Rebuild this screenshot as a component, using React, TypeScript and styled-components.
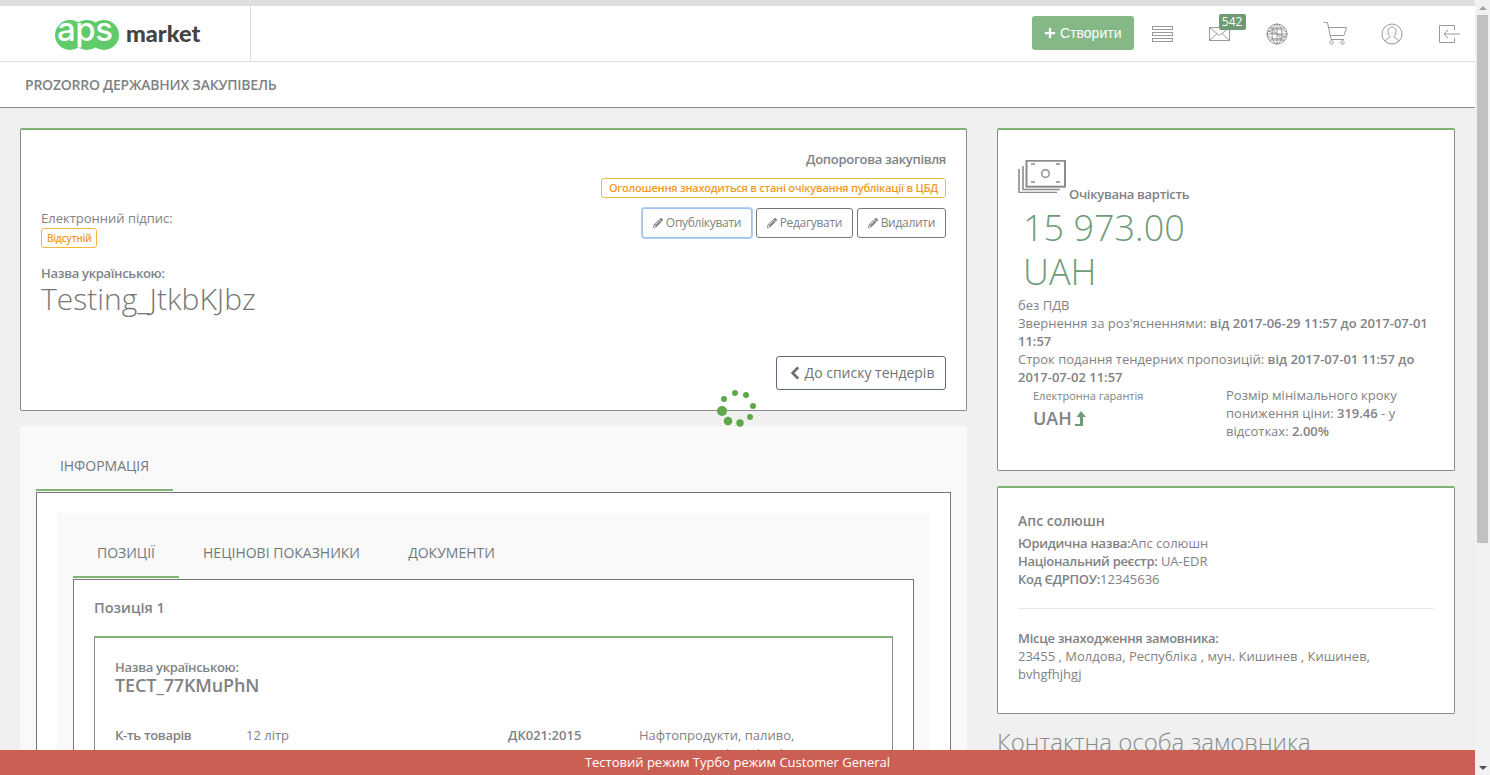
import * as React from "react";
import styled, { createGlobalStyle, css } from "styled-components";
import { FaChevronLeft, FaPencilAlt, FaPlus } from "react-icons/fa";

const GlobalStyles = createGlobalStyle`
  html, body, #root {
    height: 100%;
    overflow: hidden;
  }
  *, *:before, *:after {
    box-sizing: border-box;
    margin: 0;
    padding: 0;
  }
  body {
    background: #f0f0f0;
    color: #808285;
    font-family: "Open Sans", sans-serif;
    font-size: 13px;
    line-height: 18px;
  }
`;

// the semibold cyrillic in the shot runs narrower than ours
const tightBold = css`
  font-weight: 600;
  letter-spacing: -0.3px;
`;

const Page = styled.div`
  width: 1475px;
  height: 775px;
  overflow: hidden;
`;

const TopStrip = styled.div`
  height: 6px;
  background: #dedede;
`;

const Header = styled.header`
  display: flex;
  align-items: center;
  height: 56px;
  background: #fff;
  border-bottom: 1px solid #dcdcdc;
`;

const LogoCell = styled.div`
  width: 251px;
  height: 55px;
  display: flex;
  align-items: center;
  padding-left: 53px;
  border-right: 1px solid #dcdcdc;
`;

const HeaderActions = styled.div`
  margin-left: auto;
  display: flex;
  align-items: center;
  gap: 27.6px;
  height: 100%;
  padding-right: 10px;
`;

const CreateButton = styled.button`
  display: flex;
  align-items: center;
  gap: 4px;
  width: 102px;
  height: 34px;
  margin: 0 -14.6px 2px 0;
  padding-left: 12px;
  border: 0;
  border-radius: 3px;
  background: #85b887;
  color: #fff;
  font: 14px/20px "Liberation Sans", sans-serif;
`;

const IconSlot = styled.div`
  position: relative;
  width: 30px;
  height: 30px;
  display: flex;
  align-items: center;
  justify-content: center;
`;

const CountBadge = styled.span`
  position: absolute;
  left: 14px;
  top: -5px;
  width: 27px;
  height: 16px;
  border-radius: 2px;
  background: #6f9a72;
  color: #fff;
  font-size: 12px;
  line-height: 16px;
  text-align: center;
`;

const SubHeader = styled.div`
  height: 46px;
  padding-left: 25px;
  background: #fff;
  border-bottom: 1px solid #8a8a8a;
  font-size: 14px;
  line-height: 45px;
  color: #808285;
  ${tightBold}
  letter-spacing: -0.23px;
`;

const Columns = styled.div`
  display: grid;
  grid-template-columns: 947px 458px;
  column-gap: 30px;
  padding: 20px 20px 0;
`;

const Column = styled.div`
  display: flex;
  flex-direction: column;
`;

const Card = styled.section<{ $height: number }>`
  height: ${(p) => p.$height}px;
  background: #fff;
  border: 1px solid #8a8a8a;
  border-top: 2px solid #7fb474;
  border-radius: 2px;
`;

const HeadCard = styled(Card)`
  display: flex;
  justify-content: space-between;
  padding: 20px;
`;

const HeadLeft = styled.div`
  padding-top: 59px;
`;

const SignBadge = styled.span`
  display: inline-block;
  height: 20px;
  margin-top: 1px;
  padding: 0 5px;
  border: 1px solid #f5b642;
  border-radius: 3px;
  color: #f29b1d;
  font-size: 10px;
  line-height: 18px;
  ${tightBold}
`;

const FieldCaption = styled.div<{ $top?: number }>`
  margin-top: ${(p) => p.$top ?? 0}px;
  ${tightBold}
`;

const TenderTitle = styled.h1`
  font-size: 30px;
  font-weight: 300;
  line-height: 34px;
  color: #777;
`;

const HeadRight = styled.div`
  display: flex;
  flex-direction: column;
  align-items: flex-end;
`;

const TenderType = styled.div`
  ${tightBold}
`;

const StatusBadge = styled.div`
  height: 20px;
  margin-top: 10px;
  padding: 0 7px;
  border: 1px solid #f5b642;
  border-radius: 3px;
  color: #f29b1d;
  font-size: 11px;
  line-height: 18px;
  ${tightBold}
  letter-spacing: -0.24px;
`;

const ActionRow = styled.div`
  display: flex;
  gap: 3.5px;
  margin-top: 10px;
`;

const ActionButton = styled.button<{ $focused?: boolean }>`
  display: flex;
  align-items: center;
  justify-content: center;
  gap: 3px;
  height: 30px;
  padding: 0 10px;
  background: #fff;
  border: 1px solid ${(p) => (p.$focused ? "#9dc1f2" : "#777")};
  box-shadow: ${(p) => (p.$focused ? "0 0 0 1px #b5d0f5" : "none")};
  border-radius: 3px;
  color: #808285;
  font: 12px/18px "Open Sans", sans-serif;
  letter-spacing: -0.3px;
  svg {
    font-size: 10px;
  }
`;

const BackButton = styled.button`
  display: flex;
  align-items: center;
  justify-content: center;
  gap: 3px;
  width: 170px;
  height: 34px;
  margin-top: 118px;
  background: #fff;
  border: 1px solid #5d6c7c;
  border-radius: 3px;
  color: #6f7276;
  font: 14px/20px "Open Sans", sans-serif;
  svg {
    font-size: 14px;
    stroke: currentColor;
    stroke-width: 30px;
  }
`;

const TabsPanel = styled.section`
  margin-top: 15px;
  padding: 18px 16px 0;
  background: #f9f9f9;
`;

const TabRow = styled.div`
  display: flex;
`;

const Tab = styled.div<{ $active?: boolean; $width: number }>`
  width: ${(p) => p.$width}px;
  height: 47px;
  text-align: center;
  font-size: 14px;
  line-height: 44px;
  color: #6f7a80;
  border-bottom: 2px solid ${(p) => (p.$active ? "#7fb474" : "transparent")};
`;

const OuterBox = styled.div`
  margin-top: 1px;
  padding: 20px;
  background: #fff;
  border: 1px solid #777;
`;

const InnerPanel = styled.div`
  padding: 18px 16px 0;
  background: #f9f9f9;
`;

const PositionBox = styled.div`
  margin-top: 1px;
  background: #fff;
  border: 1px solid #777;
  padding: 18px 20px 20px;
`;

const PositionTitle = styled.h3`
  font-size: 14.5px;
  font-weight: 600;
  line-height: 20px;
  margin-bottom: 18px;
`;

const ItemCard = styled.div`
  background: #fff;
  border: 1px solid #8a8a8a;
  border-top: 2px solid #7fb474;
  padding: 20px;
  height: 300px;
`;

const ItemName = styled.div`
  margin-top: -2px;
  font-size: 18px;
  font-weight: 600;
  letter-spacing: -0.15px;
  line-height: 22px;
`;

const ItemGrid = styled.div`
  display: grid;
  grid-template-columns: 131px 262px 131px 190px;
  margin-top: 30px;
`;

const ItemLabel = styled.div`
  ${tightBold}
`;

const ItemCode = styled.div`
  font-weight: 600;
`;

const MoneyHead = styled.div`
  display: flex;
  align-items: flex-end;
  gap: 3px;
`;

const MoneyCaption = styled.div`
  margin-bottom: -10px;
  ${tightBold}
`;

const Amount = styled.div`
  width: 200px;
  margin-top: 13px;
  padding-left: 5px;
  font-size: 36px;
  font-weight: 300;
  line-height: 44px;
  color: #6f9c78;
`;

const PriceCard = styled(Card)`
  padding: 30px 20px 0;
`;

const VendorCard = styled(Card)`
  margin-top: 15px;
  padding: 23px 20px 0;
`;

const InfoLines = styled.div<{ $top?: number }>`
  margin-top: ${(p) => p.$top ?? 0}px;
  b {
    font-weight: 600;
  }
`;

const InfoLabel = styled.span`
  ${tightBold}
`;

const GuaranteeRow = styled.div`
  display: grid;
  grid-template-columns: 208px 208px;
  margin-top: 1px;
`;

const GuaranteeBox = styled.div`
  padding-left: 15px;
`;

const GuaranteeCaption = styled.div`
  font-size: 11px;
`;

const GuaranteeValue = styled.div`
  display: flex;
  align-items: center;
  gap: 3px;
  margin-top: 1px;
  font-size: 18px;
  font-weight: 600;
  line-height: 24px;
`;

const StepText = styled.div`
  margin-top: -1px;
  b {
    font-weight: 600;
  }
`;

const VendorName = styled.h3`
  font-size: 14px;
  font-weight: 600;
  line-height: 20px;
  margin-bottom: 3px;
`;

const Divider = styled.hr`
  margin: 20px 0;
  border: 0;
  border-top: 1px solid #e6e6e6;
`;

const ContactTitle = styled.h2`
  margin-top: 12px;
  font-size: 24px;
  font-weight: 300;
  line-height: 32px;
  color: #8a8a8a;
  white-space: nowrap;
`;

const TestBar = styled.div`
  position: fixed;
  left: 0;
  bottom: 0;
  width: 1475px;
  height: 25px;
  background: #cb5f53;
  color: #fff;
  text-align: center;
  font-size: 13px;
  line-height: 25px;
`;

const Spinner = styled.svg`
  position: fixed;
  left: 712px;
  top: 385px;
`;

const FakeScrollbar = styled.div`
  position: fixed;
  right: 0;
  top: 0;
  width: 15px;
  height: 775px;
  background: #f1f1f1;
`;

const ScrollThumb = styled.div`
  position: absolute;
  left: 2px;
  top: 15px;
  width: 11px;
  height: 528px;
  background: #c1c1c1;
`;

const ScrollArrow = styled.div<{ $down?: boolean }>`
  position: absolute;
  left: 4px;
  ${(p) => (p.$down ? "bottom: 5px;" : "top: 6px;")}
  border-left: 4px solid transparent;
  border-right: 4px solid transparent;
  ${(p) => (p.$down ? "border-top: 4px solid #505050;" : "border-bottom: 4px solid #a3a3a3;")}
`;

const Logo = () => (
  <svg width="150" height="40" viewBox="0 -3 150 40">
    <circle cx="17" cy="18" r="15" fill="#5fcb6b" />
    <circle cx="34" cy="18" r="15" fill="#5fcb6b" />
    <circle cx="51" cy="18" r="15" fill="#5fcb6b" />
    <text x="4" y="24" fill="#fff" fontFamily="Inter, sans-serif" fontSize="33" fontWeight="500" letterSpacing="-0.5">
      aps
    </text>
    <text x="73" y="25" fill="#444" fontFamily="Lato, sans-serif" fontSize="23.5" fontWeight="900">
      market
    </text>
  </svg>
);

const lineIcon = { fill: "none", stroke: "#9a9a9a", strokeWidth: 1 };

const MenuIcon = () => (
  <svg width="21" height="16" viewBox="0 0 21 16" {...lineIcon}>
    <rect x="0.5" y="0.5" width="20" height="3" />
    <rect x="0.5" y="6.5" width="20" height="3" />
    <rect x="0.5" y="12.5" width="20" height="3" />
  </svg>
);

const MailIcon = () => (
  <svg width="22" height="16" viewBox="0 0 22 16" {...lineIcon}>
    <rect x="0.5" y="1.5" width="20" height="13" />
    <path d="M0.5 1.5 L10.5 9.5 L20.5 1.5 M0.5 14.5 L8 7.5 M20.5 14.5 L13 7.5" />
  </svg>
);

const GlobeIcon = () => (
  <svg width="22" height="22" viewBox="0 0 22 22" {...lineIcon}>
    <circle cx="11" cy="11" r="10" />
    <ellipse cx="11" cy="11" rx="5" ry="10" />
    <ellipse cx="11" cy="11" rx="10" ry="5" />
    <path d="M11 1V21M1 11H21M3 5H19M3 17H19M2 8 L20 14 M4 3 L18 19" />
  </svg>
);

const CartIcon = () => (
  <svg width="24" height="23" viewBox="0 0 24 23" {...lineIcon}>
    <path d="M0.5 0.5H4.5L8 17.5H21M5.5 5.5H23.5L21 13.5H7" />
    <circle cx="8.5" cy="20.5" r="1.7" />
    <circle cx="19.5" cy="20.5" r="1.7" />
  </svg>
);

const UserIcon = () => (
  <svg width="22" height="22" viewBox="0 0 22 22" {...lineIcon}>
    <circle cx="11" cy="11" r="10" />
    <path d="M4.5 18 C5 15 9 15.5 9 13.5 C7.5 12 7 10 7 8 C7 5.5 9 4 11 4 C13 4 15 5.5 15 8 C15 10 14.5 12 13 13.5 C13 15.5 17 15 17.5 18" />
  </svg>
);

const ExitIcon = () => (
  <svg width="22" height="18" viewBox="0 0 22 18" {...lineIcon}>
    <path d="M15.5 5V0.5H0.5V17.5H15.5V13M21 9H5M9 5L5 9L9 13" />
  </svg>
);

const MoneyIcon = () => (
  <svg width="48" height="33" viewBox="0 0 48 33" fill="none" stroke="#8c8c8c" strokeWidth="1.4">
    <rect x="8.5" y="0.7" width="38.5" height="26" strokeWidth="2" />
    <path d="M5 6V29.5H42M1 9V32.5H39" strokeWidth="1.6" />
    <circle cx="27.5" cy="13.5" r="3.8" />
    <path d="M13 4H17M38 4H42M13 22H17M38 22H42" />
  </svg>
);

const UpArrow = () => (
  <svg width="11" height="15" viewBox="0 0 11 15" fill="#6f9c78">
    <path d="M6 0L11 6H8V15H0V13H5V6H1.5Z" />
  </svg>
);

const spinnerDots = [
  { cx: 10, cy: 26, r: 5 },
  { cx: 16, cy: 36, r: 4.3 },
  { cx: 28, cy: 38, r: 3.7 },
  { cx: 38, cy: 32, r: 3 },
  { cx: 41, cy: 21, r: 3 },
  { cx: 34, cy: 10, r: 3 },
  { cx: 23, cy: 8, r: 3 },
  { cx: 12, cy: 14, r: 3 },
];

const App = () => {
  return (
    <>
      <GlobalStyles />
      <Page>
        <TopStrip />
        <Header>
          <LogoCell>
            <Logo />
          </LogoCell>
          <HeaderActions>
            <CreateButton>
              <FaPlus size={12} />
              Створити
            </CreateButton>
            <IconSlot>
              <MenuIcon />
            </IconSlot>
            <IconSlot>
              <MailIcon />
              <CountBadge>542</CountBadge>
            </IconSlot>
            <IconSlot>
              <GlobeIcon />
            </IconSlot>
            <IconSlot>
              <CartIcon />
            </IconSlot>
            <IconSlot>
              <UserIcon />
            </IconSlot>
            <IconSlot>
              <ExitIcon />
            </IconSlot>
          </HeaderActions>
        </Header>
        <SubHeader>PROZORRO ДЕРЖАВНИХ ЗАКУПІВЕЛЬ</SubHeader>
        <Columns>
          <Column>
            <HeadCard $height={283}>
              <HeadLeft>
                <div>Електронний підпис:</div>
                <SignBadge>Відсутній</SignBadge>
                <FieldCaption $top={16}>Назва українською:</FieldCaption>
                <TenderTitle>Testing_JtkbKJbz</TenderTitle>
              </HeadLeft>
              <HeadRight>
                <TenderType>Допорогова закупівля</TenderType>
                <StatusBadge>Оголошення знаходиться в стані очікування публікації в ЦБД</StatusBadge>
                <ActionRow>
                  <ActionButton $focused>
                    <FaPencilAlt />
                    Опублікувати
                  </ActionButton>
                  <ActionButton>
                    <FaPencilAlt />
                    Редагувати
                  </ActionButton>
                  <ActionButton>
                    <FaPencilAlt />
                    Видалити
                  </ActionButton>
                </ActionRow>
                <BackButton>
                  <FaChevronLeft />
                  До списку тендерів
                </BackButton>
              </HeadRight>
            </HeadCard>
            <TabsPanel>
              <TabRow>
                <Tab $active $width={137}>
                  ІНФОРМАЦІЯ
                </Tab>
              </TabRow>
              <OuterBox>
                <InnerPanel>
                  <TabRow>
                    <Tab $active $width={106}>
                      ПОЗИЦІЇ
                    </Tab>
                    <Tab $width={205}>НЕЦІНОВІ ПОКАЗНИКИ</Tab>
                    <Tab $width={135}>ДОКУМЕНТИ</Tab>
                  </TabRow>
                  <PositionBox>
                    <PositionTitle>Позиція 1</PositionTitle>
                    <ItemCard>
                      <FieldCaption>Назва українською:</FieldCaption>
                      <ItemName>ТЕСТ_77KMuPhN</ItemName>
                      <ItemGrid>
                        <ItemLabel>К-ть товарів</ItemLabel>
                        <div>12 літр</div>
                        <ItemCode>ДК021:2015</ItemCode>
                        <div>Нафтопродукти, паливо, електроенергія та інші джерела енергії</div>
                      </ItemGrid>
                    </ItemCard>
                  </PositionBox>
                </InnerPanel>
              </OuterBox>
            </TabsPanel>
          </Column>
          <Column>
            <PriceCard $height={343}>
              <MoneyHead>
                <MoneyIcon />
                <MoneyCaption>Очікувана вартість</MoneyCaption>
              </MoneyHead>
              <Amount>15 973.00 UAH</Amount>
              <InfoLines $top={2}>
                без ПДВ
                <br />
                Звернення за роз'ясненнями: <b>від 2017-06-29 11:57 до 2017-07-01 11:57</b>
                <br />
                Строк подання тендерних пропозицій: <b>від 2017-07-01 11:57 до 2017-07-02 11:57</b>
              </InfoLines>
              <GuaranteeRow>
                <GuaranteeBox>
                  <GuaranteeCaption>Електронна гарантія</GuaranteeCaption>
                  <GuaranteeValue>
                    UAH <UpArrow />
                  </GuaranteeValue>
                </GuaranteeBox>
                <StepText>
                  Розмір мінімального кроку пониження ціни: <b>319.46</b> - у відсотках: <b>2.00%</b>
                </StepText>
              </GuaranteeRow>
            </PriceCard>
            <VendorCard $height={228}>
              <VendorName>Апс солюшн</VendorName>
              <InfoLines>
                <InfoLabel>Юридична назва:</InfoLabel>Апс солюшн
                <br />
                <InfoLabel>Національний реєстр:</InfoLabel> UA-EDR
                <br />
                <InfoLabel>Код ЄДРПОУ:</InfoLabel>12345636
              </InfoLines>
              <Divider />
              <InfoLines>
                <InfoLabel>Місце знаходження замовника:</InfoLabel>
                <br />
                23455 , Молдова, Республіка , мун. Кишинев , Кишинев, bvhgfhjhgj
              </InfoLines>
            </VendorCard>
            <ContactTitle>Контактна особа замовника</ContactTitle>
          </Column>
        </Columns>
      </Page>
      <Spinner width="60" height="50" viewBox="0 0 60 50" fill="#5fa84a">
        {spinnerDots.map((dot) => (
          <circle key={`${dot.cx}-${dot.cy}`} cx={dot.cx} cy={dot.cy} r={dot.r} />
        ))}
      </Spinner>
      <TestBar>Тестовий режим Турбо режим Customer General</TestBar>
      <FakeScrollbar>
        <ScrollArrow />
        <ScrollThumb />
        <ScrollArrow $down />
      </FakeScrollbar>
    </>
  );
};

export default App;
